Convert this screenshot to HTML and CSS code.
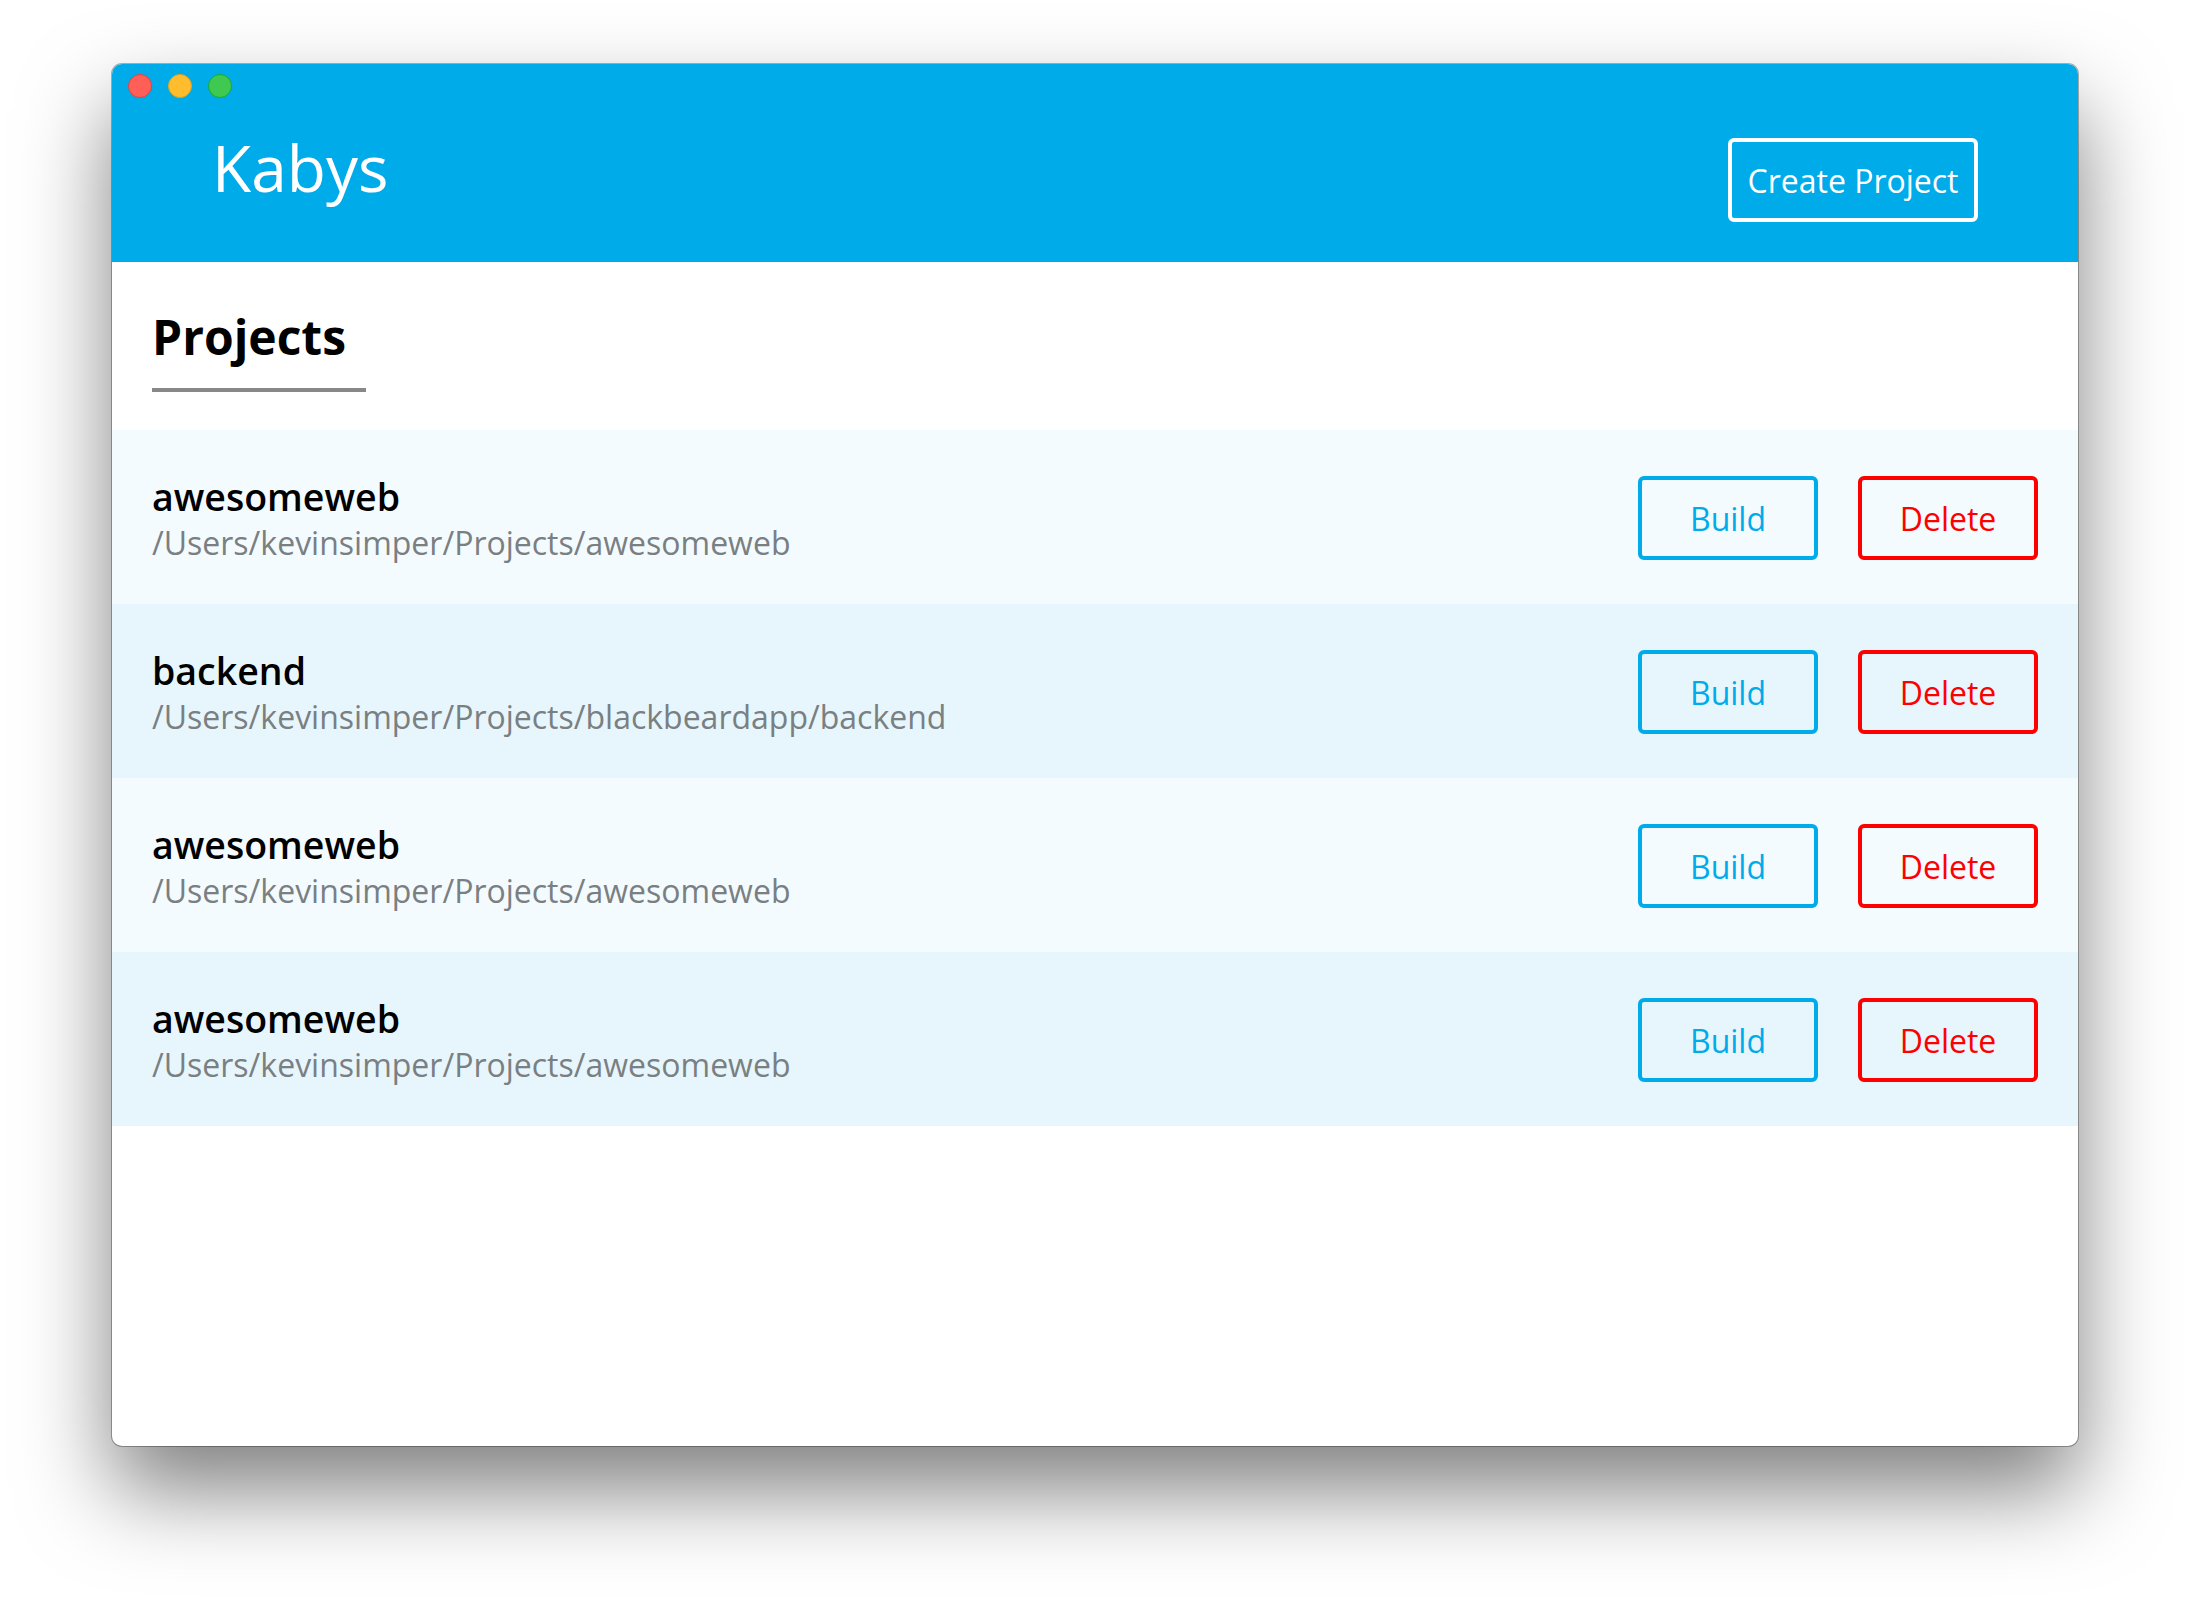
FILE: index.html
```html
<!DOCTYPE html>
<html lang="en">

<head>
    <meta charset="UTF-8">
    <meta name="viewport" content="width=device-width, initial-scale=1.0">
    <title>Kabys</title>
    <link rel="stylesheet" href="styles.css">
</head>

<body>
    <div class="window">
        <header class="app-header">
            <div class="traffic-lights">
                <span class="light red"></span>
                <span class="light yellow"></span>
                <span class="light green"></span>
            </div>
            <h1>Kabys</h1>
            <button class="btn btn-create">Create Project</button>
        </header>

        <main>
            <h2 class="section-title">Projects</h2>

            <div class="project">
                <div class="project-info">
                    <div class="project-name">awesomeweb</div>
                    <div class="project-path">/Users/kevinsimper/Projects/awesomeweb</div>
                </div>
                <button class="btn btn-build">Build</button>
                <button class="btn btn-delete">Delete</button>
            </div>

            <div class="project">
                <div class="project-info">
                    <div class="project-name">backend</div>
                    <div class="project-path">/Users/kevinsimper/Projects/blackbeardapp/backend</div>
                </div>
                <button class="btn btn-build">Build</button>
                <button class="btn btn-delete">Delete</button>
            </div>

            <div class="project">
                <div class="project-info">
                    <div class="project-name">awesomeweb</div>
                    <div class="project-path">/Users/kevinsimper/Projects/awesomeweb</div>
                </div>
                <button class="btn btn-build">Build</button>
                <button class="btn btn-delete">Delete</button>
            </div>

            <div class="project">
                <div class="project-info">
                    <div class="project-name">awesomeweb</div>
                    <div class="project-path">/Users/kevinsimper/Projects/awesomeweb</div>
                </div>
                <button class="btn btn-build">Build</button>
                <button class="btn btn-delete">Delete</button>
            </div>
        </main>
    </div>
</body>

</html>
```

FILE: styles.css
```css
html, body {
    height: 100%;
}

body {
    font-family: 'Open Sans', 'Noto Sans', sans-serif;
    margin: 0;
    padding: 64px 112px 0;
    box-sizing: border-box;
    background: #fff;
    color: #000;
    overflow: hidden;
}

.window {
    width: 1966px;
    height: 1382px;
    background: #fff;
    border-radius: 10px;
    overflow: hidden;
    box-shadow: 0 0 0 1px rgba(0, 0, 0, 0.3), 0 44px 88px rgba(0, 0, 0, 0.5);
}

.app-header {
    background-color: #00abea;
    height: 198px;
    box-sizing: border-box;
    padding: 72px 100px 40px 100px;
    display: flex;
    justify-content: space-between;
    align-items: flex-start;
    position: relative;
}

.traffic-lights {
    position: absolute;
    top: 10px;
    left: 16px;
    display: flex;
    gap: 16px;
}

.light {
    width: 24px;
    height: 24px;
    box-sizing: border-box;
    border-radius: 50%;
    border: 1px solid;
}

.light.red {
    background: #ff5f57;
    border-color: #e0443e;
}

.light.yellow {
    background: #ffbd2e;
    border-color: #dea123;
}

.light.green {
    background: #3fc950;
    border-color: #1aab29;
}

.app-header h1 {
    margin: 0;
    font-size: 64px;
    font-weight: 400;
    line-height: 64px;
    color: #fff;
}

.btn {
    font-family: inherit;
    font-size: 32px;
    background: transparent;
    border: 4px solid;
    border-radius: 6px;
    padding: 0;
    height: 84px;
    box-sizing: border-box;
}

.btn-create {
    width: 250px;
    margin-top: 2px;
    color: #fff;
    border-color: #fff;
}

.section-title {
    margin: 0 0 38px 40px;
    padding: 43px 0 19px;
    width: 214px;
    font-size: 48px;
    line-height: 64px;
    font-weight: 700;
    border-bottom: 4px solid #888;
}

.project {
    height: 174px;
    box-sizing: border-box;
    padding: 2px 40px 0;
    display: flex;
    align-items: center;
    gap: 40px;
    background: #f3fbff;
}

.project:nth-of-type(even) {
    background: #e7f6fd;
}

.project-info {
    flex: 1;
    padding-top: 3px;
}

.project-name {
    font-size: 37.5px;
    font-weight: 600;
    line-height: 46px;
}

.project-path {
    font-size: 32px;
    line-height: 46px;
    color: #7a7f82;
}

.btn-build,
.btn-delete {
    width: 180px;
}

.btn-build {
    color: #00abea;
    border-color: #00abea;
}

.btn-delete {
    color: #f00;
    border-color: #f00;
}
```
